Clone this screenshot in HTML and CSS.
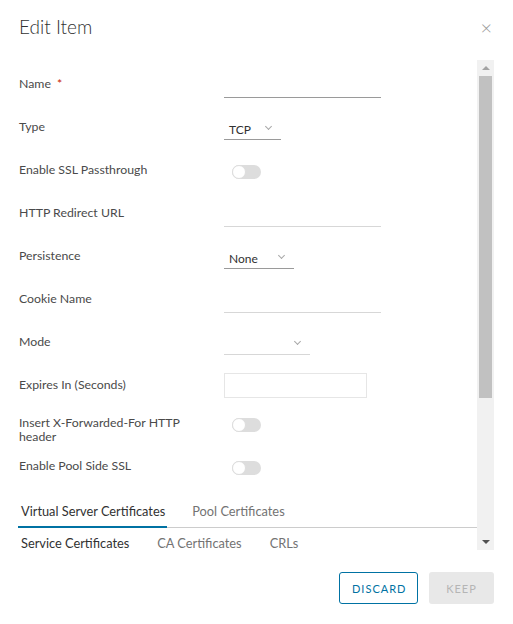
FILE: index.html
```html
<!DOCTYPE html>
<html lang="en">
<head>
    <meta charset="UTF-8">
    <title>Edit Item</title>
    <link rel="stylesheet" href="styles.css">
</head>
<body>
    <div class="modal">
        <div class="modal-header">
            <h3 class="modal-title">Edit Item</h3>
            <span class="close">&times;</span>
        </div>

        <div class="modal-body">
            <div class="scroll">
                <div class="row">
                    <label>Name <span class="req">*</span></label>
                    <div class="input line dark"></div>
                </div>
                <div class="row">
                    <label>Type</label>
                    <div class="select dark" style="width: 57px">TCP <span class="chev"></span></div>
                </div>
                <div class="row">
                    <label>Enable SSL Passthrough</label>
                    <div class="toggle"></div>
                </div>
                <div class="row">
                    <label>HTTP Redirect URL</label>
                    <div class="input line"></div>
                </div>
                <div class="row">
                    <label>Persistence</label>
                    <div class="select dark" style="width: 70px">None <span class="chev"></span></div>
                </div>
                <div class="row">
                    <label>Cookie Name</label>
                    <div class="input line"></div>
                </div>
                <div class="row">
                    <label>Mode</label>
                    <div class="select" style="width: 86px"> <span class="chev"></span></div>
                </div>
                <div class="row short">
                    <label>Expires In (Seconds)</label>
                    <div class="input box"></div>
                </div>
                <div class="row">
                    <label>Insert X-Forwarded-For HTTP<br>header</label>
                    <div class="toggle"></div>
                </div>
                <div class="row">
                    <label>Enable Pool Side SSL</label>
                    <div class="toggle"></div>
                </div>

                <div class="tabs">
                    <span class="tab active">Virtual Server Certificates</span>
                    <span class="tab">Pool Certificates</span>
                </div>
                <div class="subtabs">
                    <span class="tab active">Service Certificates</span>
                    <span class="tab">CA Certificates</span>
                    <span class="tab">CRLs</span>
                </div>
            </div>
            <div class="scrollbar">
                <span class="arrow up"></span>
                <div class="thumb"></div>
                <span class="arrow down"></span>
            </div>
        </div>

        <div class="modal-footer">
            <button class="btn outline">Discard</button>
            <button class="btn disabled">Keep</button>
        </div>
    </div>
</body>
</html>
```

FILE: styles.css
```css
* {
    box-sizing: border-box;
    margin: 0;
    padding: 0;
}

body {
    background: white;
    font-family: Lato, "Liberation Sans", sans-serif;
    color: #454545;
}

.modal {
    width: 513px;
    height: 624px;
    padding: 0 19px 0 18px;
}

.modal-header {
    height: 60px;
    display: flex;
    justify-content: space-between;
    align-items: center;
    padding-left: 1px;
    padding-bottom: 7px;
}

.modal-title {
    font-size: 19px;
    font-weight: 300;
    color: #313131;
}

.close {
    font-size: 20px;
    font-weight: 300;
    color: #9a9a9a;
    margin-right: 2px;
}

.modal-body {
    display: flex;
    height: 490px;
}

.scroll {
    flex: 1;
    overflow: hidden;
    padding: 16px 0 0 1px;
}

.row {
    display: grid;
    grid-template-columns: 205px 1fr;
    height: 43px;
}

.row.short {
    height: 38px;
}

.row label {
    font-size: 12.3px;
    line-height: 14px;
    padding-top: 1px;
    color: #4a4a4a;
}

.req {
    color: #c92100;
    margin-left: 3px;
}

.input.line {
    width: 157px;
    height: 22px;
    border-bottom: 1px solid #d7d7d7;
}

.input.line.dark {
    border-bottom-color: #9a9a9a;
}

.input.box {
    width: 143px;
    height: 25px;
    margin-top: -4px;
    border: 1px solid #e6e6e6;
}

.select {
    height: 21px;
    border-bottom: 1px solid #d7d7d7;
    font-size: 12px;
    color: #313131;
    padding: 3px 0 0 5px;
    position: relative;
}

.select.dark {
    border-bottom-color: #9a9a9a;
}

.chev {
    position: absolute;
    right: 10px;
    top: 5px;
    width: 5px;
    height: 5px;
    border-right: 1px solid #a8a8a8;
    border-bottom: 1px solid #a8a8a8;
    transform: rotate(45deg);
}

.toggle {
    margin: 3px 0 0 8px;
    width: 29px;
    height: 14px;
    border-radius: 7px;
    background: #dddddd;
    position: relative;
}

.toggle::before {
    content: '';
    position: absolute;
    left: 0;
    top: 0;
    width: 14px;
    height: 14px;
    border-radius: 50%;
    background: white;
    border: 1px solid #dddddd;
    box-sizing: border-box;
}

.tabs {
    display: flex;
    gap: 22px;
    border-bottom: 1px solid #cccccc;
    margin-left: -1px;
}

.tab {
    font-size: 12.8px;
    color: #737373;
}

.tabs .tab {
    padding: 2px 2px 7px 3px;
    border-bottom: 2px solid transparent;
    margin-bottom: -1px;
}

.tabs .tab.active {
    color: #313131;
    border-bottom-color: #0072a3;
}

.subtabs {
    display: flex;
    gap: 28px;
    padding: 7px 0 0 2px;
}

.subtabs .tab.active {
    color: #313131;
}

.scrollbar {
    width: 17px;
    background: #f1f1f1;
    display: flex;
    flex-direction: column;
    align-items: center;
    padding: 0 2px;
}

.arrow {
    width: 0;
    height: 0;
    border-left: 4px solid transparent;
    border-right: 4px solid transparent;
    margin: 6px 0;
}

.arrow.up {
    border-bottom: 4px solid #a3a3a3;
}

.arrow.down {
    border-top: 4px solid #505050;
    margin-top: auto;
}

.thumb {
    width: 13px;
    height: 322px;
    background: #c1c1c1;
}

.modal-footer {
    display: flex;
    justify-content: flex-end;
    gap: 11px;
    padding-top: 22px;
}

.btn {
    height: 32px;
    font-family: Lato, "Liberation Sans", sans-serif;
    font-size: 11px;
    letter-spacing: 1px;
    text-transform: uppercase;
    border-radius: 3px;
    background: white;
    padding: 0 12px;
}

.btn.outline {
    width: 79px;
    border: 1px solid #0072a3;
    color: #0072a3;
}

.btn.disabled {
    width: 65px;
    border: none;
    background: #e8e8e8;
    color: #b5b5b5;
}
```
